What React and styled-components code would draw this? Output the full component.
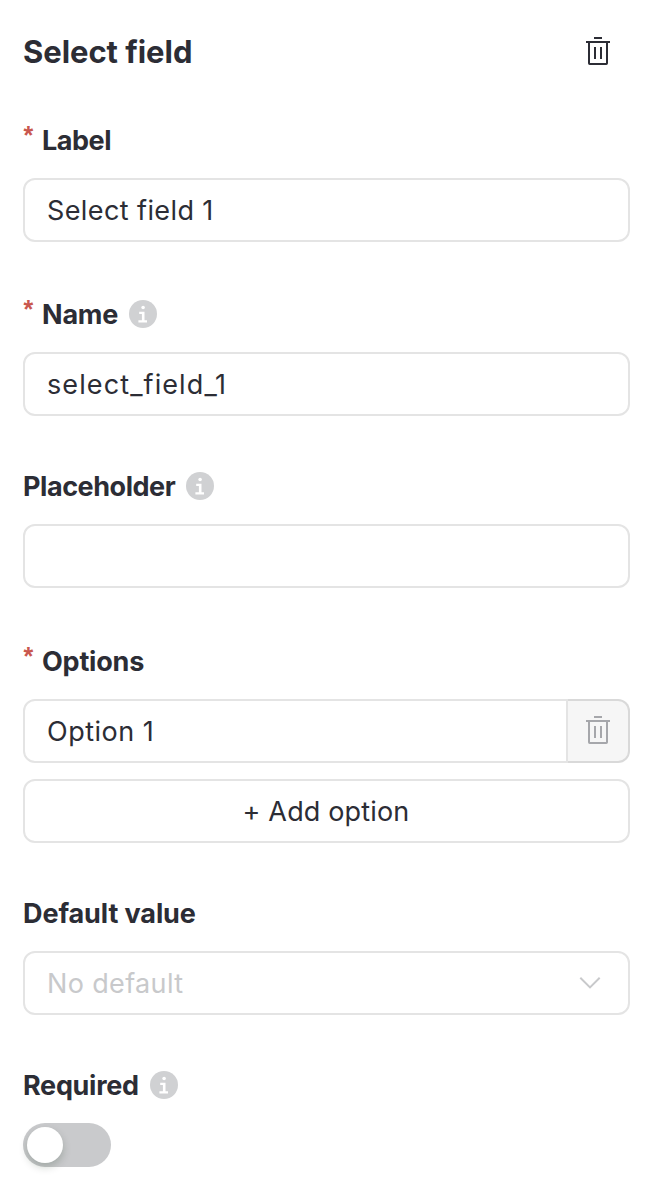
import React from "react";
import styled, { createGlobalStyle } from "styled-components";

const GlobalStyle = createGlobalStyle`
  *, *::before, *::after { box-sizing: border-box; }
  body { margin: 0; background: #fff; }
`;

const Panel = styled.main`
  width: 652px;
  height: 1190px;
  padding: 24px 22px 0 23px;
  overflow: hidden;
  background: #fff;
  color: #2c2d35;
  font-family: Inter, "Liberation Sans", sans-serif;
  font-size: 27px;
`;

const Header = styled.header`
  display: flex;
  align-items: center;
  justify-content: space-between;
  height: 56px;
  padding-right: 19px;
`;

const Title = styled.h1`
  margin: 0;
  font-size: 31px;
  font-weight: 700;
  letter-spacing: -0.05px;
  line-height: 40px;
`;

const IconButton = styled.button`
  display: flex;
  padding: 0 0 2px;
  border: 0;
  background: none;
  color: #2c2d35;
`;

const Field = styled.section`
  display: flex;
  flex-direction: column;
  gap: 16px;
  margin-top: ${(p) => p.$space ?? 48}px;
`;

const LabelRow = styled.div`
  display: flex;
  align-items: center;
  height: 44px;
  white-space: nowrap;
`;

const Asterisk = styled.span`
  width: 19px;
  padding: 0 0 10px 0.5px;
  color: #c9574e;
  font-family: "Liberation Sans", sans-serif;
  font-size: 25px;
  font-weight: 700;
  line-height: 34px;
`;

const LabelText = styled.span`
  padding-top: 2px;
  font-weight: 700;
  line-height: 42px;
  letter-spacing: ${(p) => p.$tracking ?? 0}px;
`;

const InfoSvg = styled.svg`
  margin-left: 11px;
  flex: none;
`;

const Box = styled.div`
  display: flex;
  align-items: center;
  justify-content: ${(p) => p.$justify ?? "flex-start"};
  height: 64px;
  padding: 0 23px 0 22px;
  border: 2px solid #e4e4e4;
  border-radius: 12px;
  background: #fff;
  color: ${(p) => (p.$muted ? "#c8c9cb" : "inherit")};
  white-space: nowrap;
`;

const BoxText = styled.span`
  padding-top: 2px;
  line-height: 40px;
  letter-spacing: ${(p) => p.$tracking ?? 0}px;
`;

const OptionRow = styled.div`
  display: flex;
`;

const OptionBox = styled(Box)`
  flex: 1;
  border-radius: 12px 0 0 12px;
`;

const RemoveButton = styled.button`
  display: flex;
  align-items: center;
  justify-content: center;
  width: 62px;
  height: 64px;
  padding: 0 0 2px;
  border: 2px solid #d9d9d9;
  border-left: 0;
  border-radius: 0 12px 12px 0;
  background: #f6f6f6;
  color: #a6a7ab;
`;

const Chevron = styled.svg`
  margin-right: 4px;
`;

const Toggle = styled.div`
  display: flex;
  align-items: center;
  width: 88px;
  height: 44px;
  padding: 4px;
  border-radius: 22px;
  background: #c9cacc;
`;

const Knob = styled.span`
  width: 36px;
  height: 36px;
  border-radius: 50%;
  background: #fff;
  box-shadow: 0 4px 8px rgba(0, 35, 11, 0.2);
`;

const TrashIcon = () => (
  <svg width="26" height="30" viewBox="0 0 26 30" fill="none" stroke="currentColor" strokeWidth="2">
    <path d="M9 2h8M1 6h24M4 6v21.3q0 .7.7.7h16.6q.7 0 .7-.7V6M10 11v12M16 11v12" />
  </svg>
);

const InfoIcon = () => (
  <InfoSvg width="28" height="28" viewBox="0 0 28 28">
    <circle cx="14" cy="14" r="14" fill="#d0d1d3" />
    <circle cx="14.1" cy="7.5" r="1.8" fill="#fff" />
    <path d="M10.2 11.8h5.3v8.5H18v2.1H9.4v-2.1h3.5v-6.4h-2.7z" fill="#fff" />
  </InfoSvg>
);

function FormField({ label, tracking, required, info, space, children }) {
  return (
    <Field $space={space}>
      <LabelRow>
        {required && <Asterisk>*</Asterisk>}
        <LabelText $tracking={tracking}>{label}</LabelText>
        {info && <InfoIcon />}
      </LabelRow>
      {children}
    </Field>
  );
}

export default function App() {
  return (
    <>
      <GlobalStyle />
      <Panel>
        <Header>
          <Title>Select field</Title>
          <IconButton aria-label="Delete field"><TrashIcon /></IconButton>
        </Header>
        <FormField label="Label" tracking={-0.45} required space={38}>
          <Box><BoxText $tracking={0.4}>Select field 1</BoxText></Box>
        </FormField>
        <FormField label="Name" tracking={-0.2} required info space={50}>
          <Box><BoxText $tracking={1.1}>select_field_1</BoxText></Box>
        </FormField>
        <FormField label="Placeholder" tracking={-0.45} info>
          <Box />
        </FormField>
        <FormField label="Options" tracking={-0.2} required space={51}>
          <OptionRow>
            <OptionBox><BoxText $tracking={0.5}>Option 1</BoxText></OptionBox>
            <RemoveButton aria-label="Remove option"><TrashIcon /></RemoveButton>
          </OptionRow>
          <Box $justify="center"><BoxText $tracking={0.15}>+ Add option</BoxText></Box>
        </FormField>
        <FormField label="Default value" tracking={-0.1}>
          <Box $muted $justify="space-between">
            <BoxText $tracking={0.35}>No default</BoxText>
            <Chevron width="22" height="14" viewBox="0 0 22 14" fill="none" stroke="currentColor" strokeWidth="2">
              <path d="M1.3 1.7 11 11.4l9.7-9.7" />
            </Chevron>
          </Box>
        </FormField>
        <FormField label="Required" tracking={-0.3} info>
          <Toggle role="switch" aria-checked="false"><Knob /></Toggle>
        </FormField>
      </Panel>
    </>
  );
}
